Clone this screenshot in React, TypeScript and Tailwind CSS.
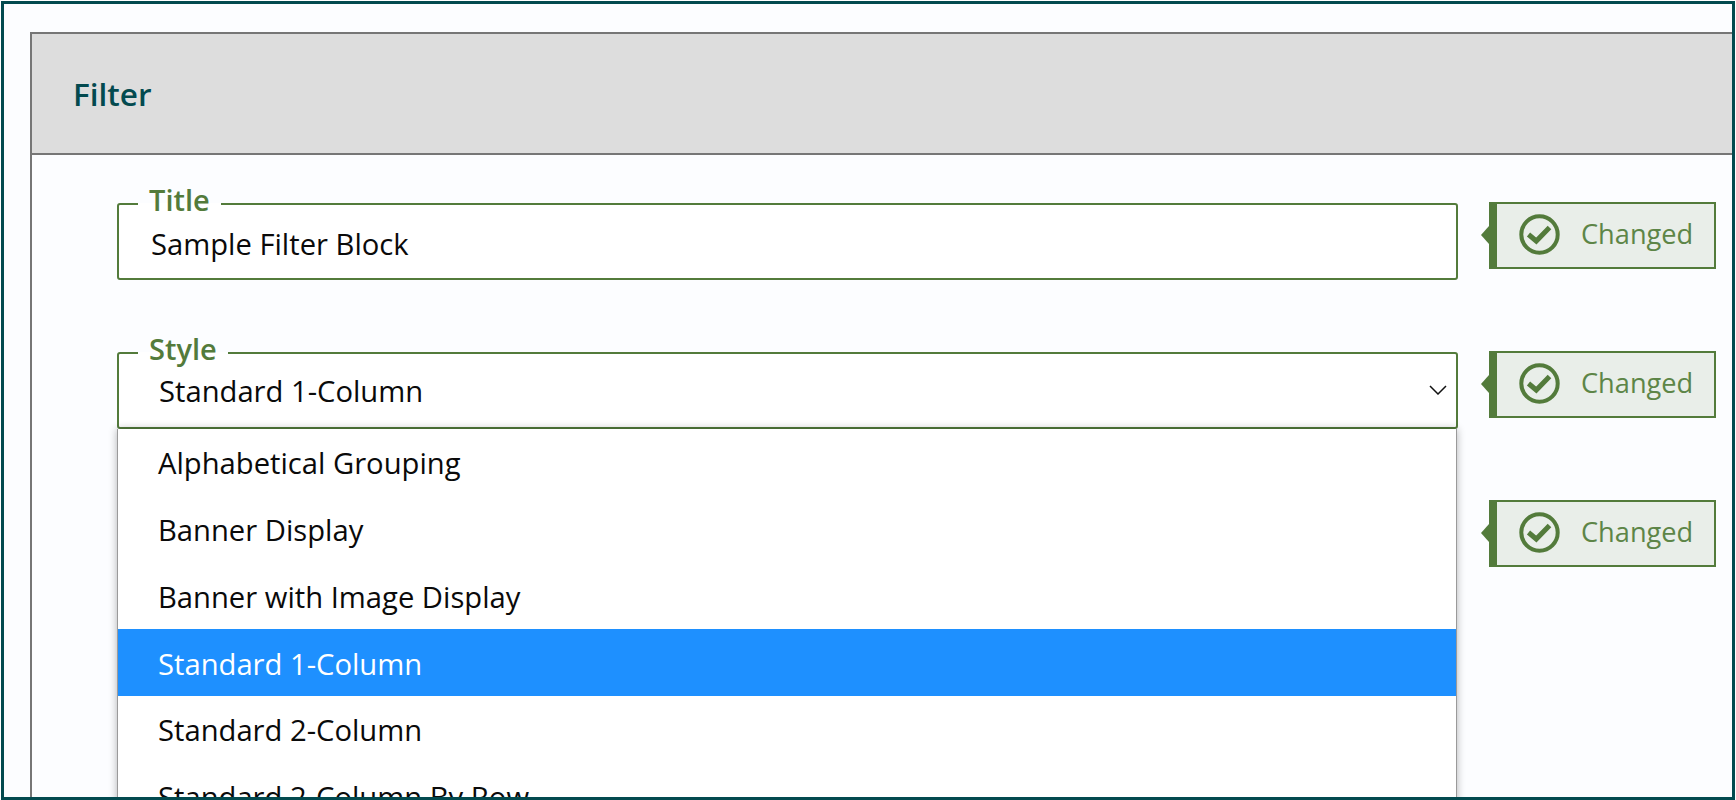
import React from "react";

function Badge() {
  return (
    <div className="relative flex h-[67px] w-[227px] items-center border-2 border-l-[8px] border-[#537b3b] bg-[#e9eee9] pb-[2px] pl-[22px]">
      <div className="absolute left-[-16px] top-[22px] h-0 w-0 border-y-[9px] border-r-[8px] border-y-transparent border-r-[#537b3b]" />
      <svg width="41" height="41" viewBox="0 0 41 41" fill="none" className="shrink-0">
        <circle cx="20.5" cy="20.5" r="18.2" stroke="#537b3b" strokeWidth="4" />
        <path d="M9.5 20.5 L17.3 27 L30.5 13.5" stroke="#537b3b" strokeWidth="5" />
      </svg>
      <span className="ml-[21px] pb-[2px] text-[27.2px] leading-none text-[#5d8547]">Changed</span>
    </div>
  );
}

function Field({ label, value, select, padding }: { label: string; value: string; select?: boolean; padding: string }) {
  return (
    <fieldset className="relative h-[77px] w-[1341px] rounded-[3px] border-2 border-[#537b3b] bg-white pl-[19px]">
      <legend className="h-[2px] px-[11px] text-[29px] font-semibold leading-[2px] text-[#537b3b]">
        <span className="relative top-[-4.5px]">{label}</span>
      </legend>
      <div className={`${padding} text-[29.2px] leading-[36px] text-[#0a0a0a]`}>{value}</div>
      {select && (
        <svg width="18" height="10" viewBox="0 0 18 10" fill="none" className="absolute right-[9px] top-[31px]">
          <path d="M1 1 L9 9 L17 1" stroke="#111" strokeWidth="1.5" />
        </svg>
      )}
    </fieldset>
  );
}

const options = [
  "Alphabetical Grouping",
  "Banner Display",
  "Banner with Image Display",
  "Standard 1-Column",
  "Standard 2-Column",
  "Standard 2-Column By Row",
];

export default function App() {
  return (
    <div
      className="h-[800px] w-[1736px] overflow-hidden bg-white pl-[1px] pr-[1px] pt-[1px]"
      style={{ fontFamily: '"Open Sans", "Noto Sans", sans-serif' }}
    >
      <div className="h-[799px] overflow-hidden border-[3px] border-[#034a4f] bg-[#fcfdff] pl-[26px] pt-[28px]">
        <div className="h-[800px] border-l-2 border-[#767676]">
          <div className="flex h-[123px] items-center border-y-2 border-[#767676] bg-[#dddddd] pl-[41px] pt-[1px]">
            <h2 className="text-[31.5px] font-semibold leading-none text-[#034a4f]">Filter</h2>
          </div>
          <div className="flex pl-[85px] pt-[48px]">
            <div className="flex w-[1341px] flex-col">
              <Field label="Title" value="Sample Filter Block" padding="pt-[21px] pl-[13px]" />
              <div className="relative mt-[72px]">
                <Field label="Style" value="Standard 1-Column" select padding="pt-[19px] pl-[21px]" />
                <ul className="absolute left-0 top-[77px] w-[1340px] border-x border-[#9a9a9a] bg-white shadow-[0_0_8px_rgba(0,0,0,0.3)]">
                  {options.map((o, i) => (
                    <li
                      key={o}
                      className={`flex h-[66.7px] items-center pl-[40px] pt-[4px] text-[29.2px] ${
                        i === 3 ? "bg-[#1e90ff] text-white" : "text-[#0a0a0a]"
                      }`}
                    >
                      {o}
                    </li>
                  ))}
                </ul>
              </div>
            </div>
            <div className="ml-[31px] -mt-[1px] flex flex-col gap-[82px]">
              <Badge />
              <Badge />
              <Badge />
            </div>
          </div>
        </div>
      </div>
    </div>
  );
}
